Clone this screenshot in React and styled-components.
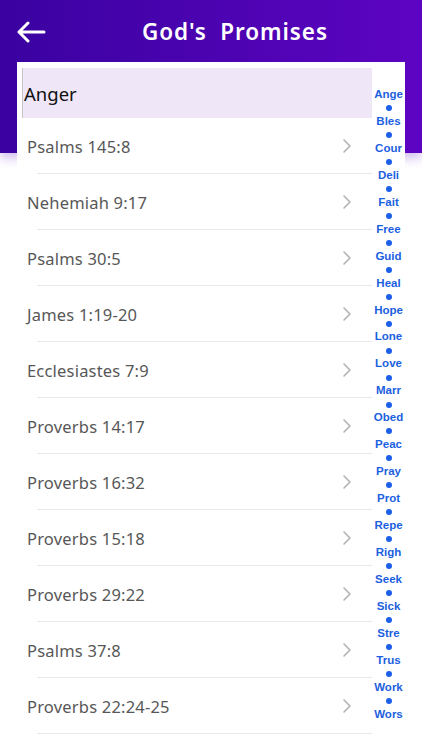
import React from "react";
import styled, { createGlobalStyle } from "styled-components";

const GlobalStyle = createGlobalStyle`
  html, body {
    margin: 0;
    padding: 0;
    background: #ffffff;
    overflow: hidden;
  }
  * { box-sizing: border-box; }
`;

const verses = [
  "Psalms 145:8",
  "Nehemiah 9:17",
  "Psalms 30:5",
  "James 1:19-20",
  "Ecclesiastes 7:9",
  "Proverbs 14:17",
  "Proverbs 16:32",
  "Proverbs 15:18",
  "Proverbs 29:22",
  "Psalms 37:8",
  "Proverbs 22:24-25",
];

const topics = [
  "Ange", "Bles", "Cour", "Deli", "Fait", "Free", "Guid", "Heal",
  "Hope", "Lone", "Love", "Marr", "Obed", "Peac", "Pray", "Prot",
  "Repe", "Righ", "Seek", "Sick", "Stre", "Trus", "Work", "Wors",
];

const BackArrow = () => (
  <svg width="30" height="22" viewBox="0 0 30 22" fill="none">
    <path
      d="M28 11H3M12 2L3 11l9 9"
      stroke="#ffffff"
      strokeWidth="3"
      strokeLinecap="round"
      strokeLinejoin="round"
    />
  </svg>
);

const Chevron = () => (
  <svg width="10" height="16" viewBox="0 0 10 16" fill="none">
    <path
      d="M2 2l6 6-6 6"
      stroke="#b3b3b3"
      strokeWidth="1.6"
      strokeLinecap="round"
      strokeLinejoin="round"
    />
  </svg>
);

const App = () => {
  return (
    <Page>
      <GlobalStyle />
      <Header>
        <TitleBar>
          <BackButton>
            <BackArrow />
          </BackButton>
          <Title>God's&nbsp; Promises</Title>
        </TitleBar>
      </Header>
      <Card>
        <List>
          <SectionHead>Anger</SectionHead>
          {verses.map((v) => (
            <Row key={v}>
              <RowText>{v}</RowText>
              <Chevron />
            </Row>
          ))}
        </List>
        <IndexColumn>
          {topics.map((t, i) => (
            <React.Fragment key={t}>
              <IndexLabel>{t}</IndexLabel>
              {i < topics.length - 1 && (
                <IndexDotWrap>
                  <IndexDot />
                </IndexDotWrap>
              )}
            </React.Fragment>
          ))}
        </IndexColumn>
      </Card>
    </Page>
  );
};

const Page = styled.div`
  width: 422px;
  height: 750px;
  overflow: hidden;
  background: #ffffff;
  font-family: "Noto Sans", "Open Sans", sans-serif;
`;

const Header = styled.header`
  height: 153px;
  background: linear-gradient(90deg, #3a02a0 0%, #4d03b2 55%, #5d04c2 100%);
  box-shadow: 0 5px 10px rgba(90, 20, 200, 0.28);
`;

const TitleBar = styled.div`
  height: 62px;
  display: flex;
  align-items: center;
  padding-left: 16px;
`;

const BackButton = styled.div`
  width: 30px;
  height: 22px;
  display: flex;
  margin-top: 2px;
`;

const Title = styled.h1`
  margin: 0 0 0 96px;
  color: #ffffff;
  font-family: "Noto Sans", sans-serif;
  font-size: 22.5px;
  font-weight: 600;
  letter-spacing: 0.9px;
`;

const Card = styled.main`
  position: relative;
  z-index: 1;
  margin: -91px 17px 0 17px;
  background: #ffffff;
  display: flex;
  padding: 6px 0 0 5px;
  height: 700px;
`;

const List = styled.div`
  width: 350px;
  display: flex;
  flex-direction: column;
`;

const SectionHead = styled.div`
  height: 50px;
  flex-shrink: 0;
  background: #efe7f7;
  border-left: 1.5px solid #c9c3cf;
  display: flex;
  align-items: center;
  padding-left: 1px;
  font-size: 18.5px;
  color: #111111;
`;

const Row = styled.div`
  height: 56px;
  flex-shrink: 0;
  display: flex;
  align-items: center;
  justify-content: space-between;
  padding: 0 20px 0 5px;
  position: relative;
  &::after {
    content: "";
    position: absolute;
    left: 15px;
    right: 0;
    bottom: 0;
    height: 1.5px;
    background: #e8e8ea;
  }
`;

const RowText = styled.span`
  font-size: 16.5px;
  color: #575757;
  letter-spacing: 0.2px;
`;

const IndexColumn = styled.nav`
  flex: 1;
  display: flex;
  flex-direction: column;
  align-items: center;
  padding-top: 20px;
`;

const IndexLabel = styled.div`
  height: 13.48px;
  line-height: 13.48px;
  font-family: "Liberation Sans", Arial, sans-serif;
  font-weight: 700;
  font-size: 11.5px;
  color: #1c5fe0;
`;

const IndexDotWrap = styled.div`
  height: 13.48px;
  display: flex;
  align-items: center;
  justify-content: center;
`;

const IndexDot = styled.span`
  width: 6px;
  height: 6px;
  border-radius: 50%;
  background: #1c5fe8;
`;

export default App;
